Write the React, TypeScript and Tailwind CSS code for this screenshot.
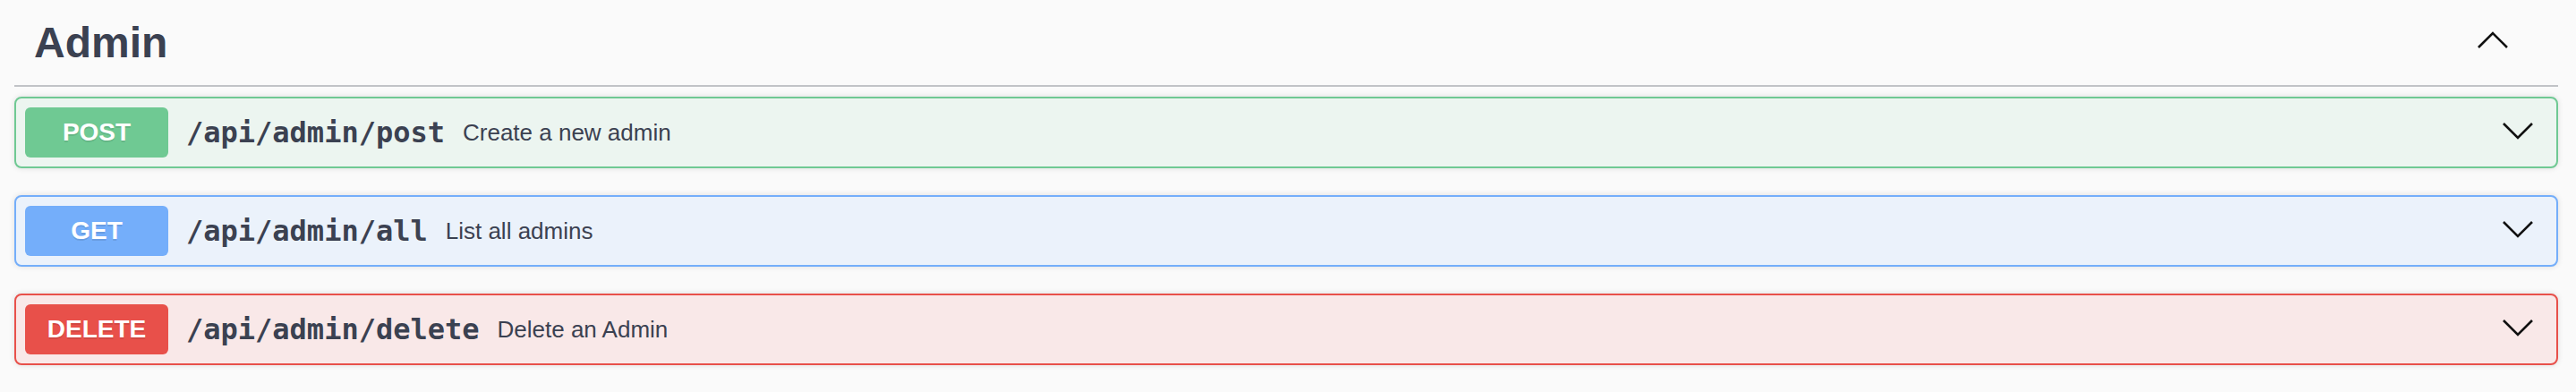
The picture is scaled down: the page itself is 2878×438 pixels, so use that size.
import React from "react";

type Op = {
  method: string;
  path: string;
  desc: string;
  badge: string;
  border: string;
  bg: string;
};

const ops: Op[] = [
  {
    method: "POST",
    path: "/api/admin/post",
    desc: "Create a new admin",
    badge: "bg-[#6fc993]",
    border: "border-[#6fc993]",
    bg: "bg-[#ecf5f0]",
  },
  {
    method: "GET",
    path: "/api/admin/all",
    desc: "List all admins",
    badge: "bg-[#74aefa]",
    border: "border-[#74aefa]",
    bg: "bg-[#ebf2fb]",
  },
  {
    method: "DELETE",
    path: "/api/admin/delete",
    desc: "Delete an Admin",
    badge: "bg-[#e8504a]",
    border: "border-[#e8504a]",
    bg: "bg-[#f9e8e8]",
  },
];

function Chevron({ up, className }: { up?: boolean; className?: string }) {
  return (
    <svg
      width="36"
      height="20"
      viewBox="0 0 36 20"
      className={className}
      aria-hidden="true"
    >
      <polyline
        points={up ? "2,18 18,2 34,18" : "2,2 18,18 34,2"}
        fill="none"
        stroke="#111"
        strokeWidth="2.6"
      />
    </svg>
  );
}

export default function App() {
  return (
    <div className="min-h-screen bg-[#fafafa] pl-[16px] pr-[20px] text-[#3b4151] font-['Liberation_Sans',Arial,sans-serif]">
      <div className="flex items-center border-b-2 border-[#c1c3c7] pt-[20px] pb-[20px] pl-[22px] pr-[55px] mb-[11px]">
        <h3 className="flex-1 text-[48px] font-bold leading-[55px]">Admin</h3>
        <Chevron up className="mb-[6px]" />
      </div>
      {ops.map((op) => (
        <div
          key={op.method}
          className={`mb-[30px] rounded-[8px] border-2 ${op.border} ${op.bg} shadow-[0_0_6px_rgba(0,0,0,0.12)]`}
        >
          <div className="flex items-center p-[10px]">
            <span
              className={`w-[160px] shrink-0 rounded-[6px] py-[12px] text-center text-[28px] font-bold leading-[32px] text-white [text-shadow:0_2px_0_rgba(0,0,0,0.1)] ${op.badge}`}
            >
              {op.method}
            </span>
            <span className="px-[20px] font-['DejaVu_Sans_Mono',monospace] text-[32px] font-bold leading-[37px]">
              {op.path}
            </span>
            <span className="flex-1 text-[26px] leading-[30px]">{op.desc}</span>
            <Chevron className="mr-[15px] mb-[4px]" />
          </div>
        </div>
      ))}
    </div>
  );
}
